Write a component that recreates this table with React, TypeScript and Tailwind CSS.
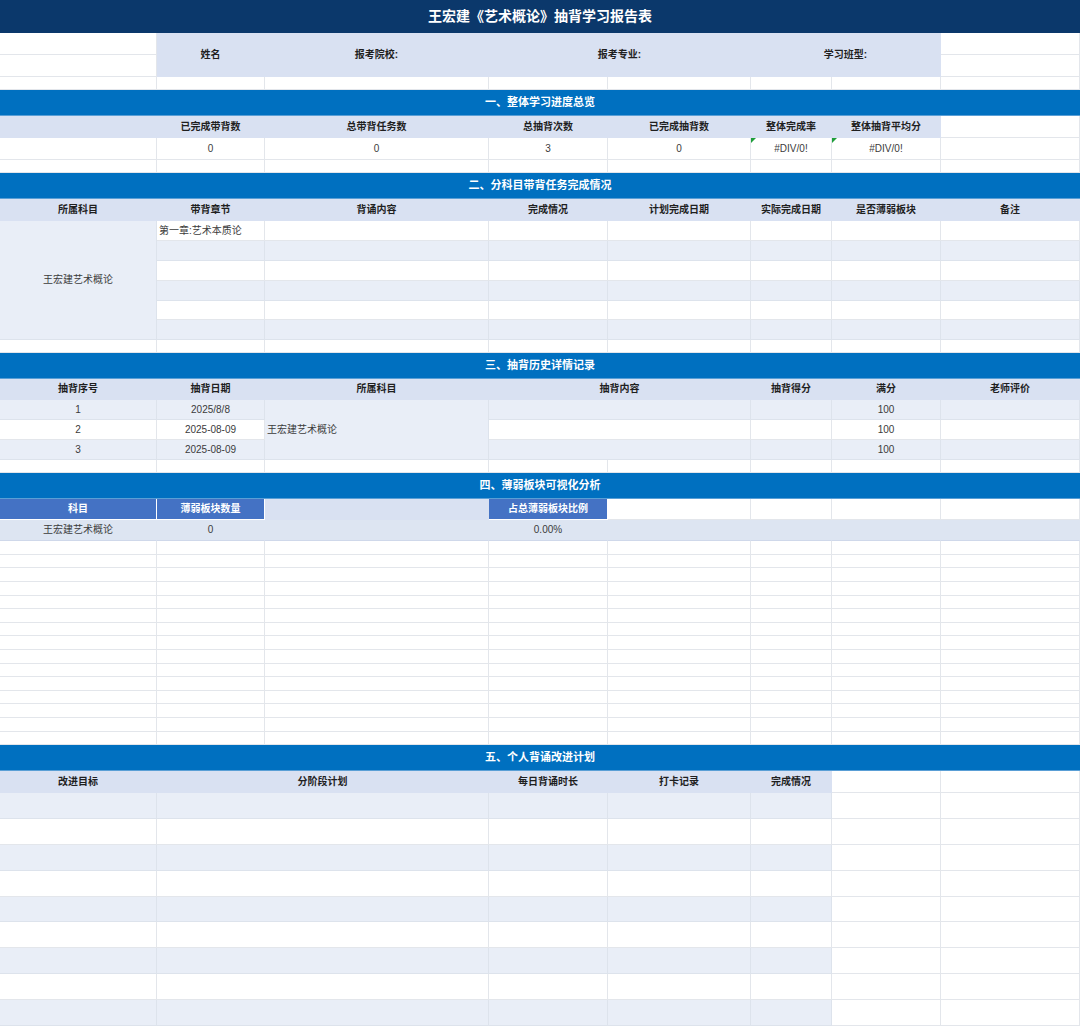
import React from "react"
import { twMerge } from "tailwind-merge"

const GRID = "grid grid-cols-[157px_108px_224px_119px_143px_81px_109px_139px]"
const HEAD = "bg-[#d9e1f2] border-[#d9e1f2] font-bold text-[#1f1f1f]"
const LIGHT = "bg-[#e9eef7] border-[#dde3ec]"
const MID = "bg-[#4472c4] border-white text-white font-bold"

function Cell({ className = "", children }: { className?: string; children?: React.ReactNode }) {
  return (
    <div
      className={twMerge(
        "relative flex items-center justify-center border-r border-b border-[#e3e6eb] bg-white text-[10px] text-[#3b3b3b] leading-none whitespace-nowrap",
        className
      )}
    >
      {children}
    </div>
  )
}

function Band({ title }: { title: string }) {
  return (
    <div className="h-[26px] bg-[#0070c0] border-b border-[#5a9fd6] flex items-center justify-center text-white font-bold text-[11px]">
      {title}
    </div>
  )
}

function BlankRow({ h = "h-[13px]" }: { h?: string }) {
  return (
    <div className={`${GRID} ${h}`}>
      {Array.from({ length: 8 }).map((_, i) => (
        <Cell key={i} />
      ))}
    </div>
  )
}

function Flag() {
  return (
    <span className="absolute left-0 top-0 w-0 h-0 border-t-[5px] border-r-[5px] border-t-[#1e9e3a] border-r-transparent" />
  )
}

const sec1Heads = ["", "已完成带背数", "总带背任务数", "总抽背次数", "已完成抽背数", "整体完成率", "整体抽背平均分"]
const sec2Heads = ["所属科目", "带背章节", "背诵内容", "完成情况", "计划完成日期", "实际完成日期", "是否薄弱板块", "备注"]
const sec2Rows = [20, 20, 20, 20, 19, 20]
const history = [
  { no: "1", date: "2025/8/8", light: true },
  { no: "2", date: "2025-08-09", light: false },
  { no: "3", date: "2025-08-09", light: true },
]
const blankHeights = [14, 13, 14, 14, 13, 14, 13, 14, 14, 13, 14, 13, 14, 14, 13]
const planRows = [26, 26, 26, 26, 25, 26, 26, 26, 26]

export default function App() {
  return (
    <div className="w-[1080px] h-[1026px] overflow-hidden bg-white font-['Liberation_Sans','Noto_Sans_CJK_SC',sans-serif]">
      <div className="h-[33px] bg-[#0b386b] flex items-center justify-center text-white font-bold text-[14px]">
        王宏建《艺术概论》抽背学习报告表
      </div>

      {/* 基本信息 */}
      <div className={`${GRID} grid-rows-[22px_22px]`}>
        <Cell />
        <Cell className={`row-span-2 ${HEAD}`}>姓名</Cell>
        <Cell className={`row-span-2 ${HEAD}`}>报考院校:</Cell>
        <Cell className={`row-span-2 col-span-2 ${HEAD}`}>报考专业:</Cell>
        <Cell className={`row-span-2 col-span-2 ${HEAD}`}>学习班型:</Cell>
        <Cell />
        <Cell />
        <Cell />
      </div>
      <BlankRow />

      {/* 一 */}
      <Band title="一、整体学习进度总览" />
      <div className={`${GRID} grid-rows-[22px_22px]`}>
        {sec1Heads.map((h, i) => (
          <Cell key={i} className={HEAD}>
            {h}
          </Cell>
        ))}
        <Cell />
        <Cell />
        <Cell>0</Cell>
        <Cell>0</Cell>
        <Cell>3</Cell>
        <Cell>0</Cell>
        <Cell>
          <Flag />
          #DIV/0!
        </Cell>
        <Cell>
          <Flag />
          #DIV/0!
        </Cell>
        <Cell />
      </div>
      <BlankRow />

      {/* 二 */}
      <Band title="二、分科目带背任务完成情况" />
      <div className={`${GRID} grid-rows-[22px_20px_20px_20px_20px_19px_20px_13px]`}>
        {sec2Heads.map((h) => (
          <Cell key={h} className={HEAD}>
            {h}
          </Cell>
        ))}
        <Cell className={`row-span-6 ${LIGHT}`}>王宏建艺术概论</Cell>
        {sec2Rows.map((_, r) =>
          Array.from({ length: 7 }).map((__, c) => (
            <Cell key={`${r}-${c}`} className={twMerge(r % 2 === 1 && LIGHT, c === 0 && "justify-start pl-[2px]")}>
              {r === 0 && c === 0 ? "第一章:艺术本质论" : null}
            </Cell>
          ))
        )}
        {Array.from({ length: 8 }).map((_, i) => (
          <Cell key={`b${i}`} />
        ))}
      </div>

      {/* 三 */}
      <Band title="三、抽背历史详情记录" />
      <div className={`${GRID} grid-rows-[21px_20px_20px_20px_13px]`}>
        <Cell className={HEAD}>抽背序号</Cell>
        <Cell className={HEAD}>抽背日期</Cell>
        <Cell className={HEAD}>所属科目</Cell>
        <Cell className={`col-span-2 ${HEAD}`}>抽背内容</Cell>
        <Cell className={HEAD}>抽背得分</Cell>
        <Cell className={HEAD}>满分</Cell>
        <Cell className={HEAD}>老师评价</Cell>
        {history.map((row, i) => (
          <React.Fragment key={row.no}>
            <Cell className={row.light ? LIGHT : ""}>{row.no}</Cell>
            <Cell className={row.light ? LIGHT : ""}>{row.date}</Cell>
            {i === 0 && (
              <Cell className={`row-span-3 justify-start pl-[2px] ${LIGHT}`}>王宏建艺术概论</Cell>
            )}
            <Cell className={`col-span-2 ${row.light ? LIGHT : ""}`} />
            <Cell className={row.light ? LIGHT : ""} />
            <Cell className={row.light ? LIGHT : ""}>100</Cell>
            <Cell className={row.light ? LIGHT : ""} />
          </React.Fragment>
        ))}
        {Array.from({ length: 8 }).map((_, i) => (
          <Cell key={`b${i}`} />
        ))}
      </div>

      {/* 四 */}
      <Band title="四、薄弱板块可视化分析" />
      <div className={`${GRID} grid-rows-[21px_21px]`}>
        <Cell className={MID}>科目</Cell>
        <Cell className={MID}>薄弱板块数量</Cell>
        <Cell className="bg-[#d9e1f2] border-[#d9e1f2]" />
        <Cell className={MID}>占总薄弱板块比例</Cell>
        <Cell />
        <Cell />
        <Cell />
        <Cell />
        {["王宏建艺术概论", "0", "", "0.00%", "", "", "", ""].map((t, i) => (
          <Cell key={i} className="bg-[#dde5f2] border-[#dde5f2] border-b-[#cfd8ea]">
            {t}
          </Cell>
        ))}
      </div>
      {blankHeights.map((h, i) => (
        <BlankRow key={i} h={h === 14 ? "h-[14px]" : "h-[13px]"} />
      ))}

      {/* 五 */}
      <Band title="五、个人背诵改进计划" />
      <div className={`${GRID} grid-rows-[22px_26px_26px_26px_26px_25px_26px_26px_26px_26px]`}>
        <Cell className={HEAD}>改进目标</Cell>
        <Cell className={`col-span-2 ${HEAD}`}>分阶段计划</Cell>
        <Cell className={HEAD}>每日背诵时长</Cell>
        <Cell className={HEAD}>打卡记录</Cell>
        <Cell className={HEAD}>完成情况</Cell>
        <Cell />
        <Cell />
        {planRows.map((_, r) => (
          <React.Fragment key={r}>
            <Cell className={r % 2 === 0 ? LIGHT : ""} />
            <Cell className={`col-span-2 ${r % 2 === 0 ? LIGHT : ""}`} />
            <Cell className={r % 2 === 0 ? LIGHT : ""} />
            <Cell className={r % 2 === 0 ? LIGHT : ""} />
            <Cell className={r % 2 === 0 ? LIGHT : ""} />
            <Cell />
            <Cell />
          </React.Fragment>
        ))}
      </div>
    </div>
  )
}
